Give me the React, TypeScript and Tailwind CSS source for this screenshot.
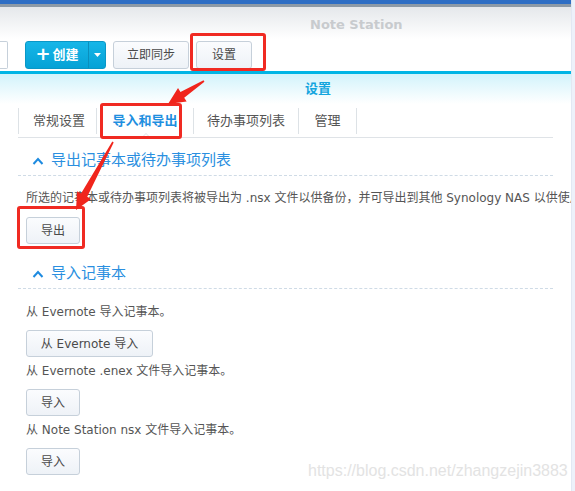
const font = { fontFamily: '"DejaVu Sans", "Noto Sans CJK SC", sans-serif' };

function Btn({ children, className = "" }: { children: React.ReactNode; className?: string }) {
  return (
    <div
      className={
        "h-[27px] flex items-center justify-center rounded-[3px] border border-[#c6d0da] bg-gradient-to-b from-[#fbfcfe] to-[#eef2f7] text-[12px] text-[#4a4a4a] " +
        className
      }
    >
      {children}
    </div>
  );
}

// tapered red arrow, tail -> tip
function Arrow({ x1, y1, x2, y2 }: { x1: number; y1: number; x2: number; y2: number }) {
  const dx = x2 - x1;
  const dy = y2 - y1;
  const len = Math.hypot(dx, dy);
  const ux = dx / len;
  const uy = dy / len;
  const px = -uy;
  const py = ux;
  const head = 17;
  const hw = 8;
  const bx = x2 - ux * head;
  const by = y2 - uy * head;
  const pts = [
    [x1 + px * 0.8, y1 + py * 0.8],
    [bx + px * 3.5, by + py * 3.5],
    [bx + px * hw, by + py * hw],
    [x2, y2],
    [bx - px * hw, by - py * hw],
    [bx - px * 3.5, by - py * 3.5],
    [x1 - px * 0.8, y1 - py * 0.8],
  ]
    .map(p => p.join(","))
    .join(" ");
  return <polygon points={pts} fill="#f0251c" />;
}

function Section({ title }: { title: string }) {
  return (
    <div className="mx-[18px] h-[38px] border-b border-dashed border-[#cfdbe6] flex items-center pl-[14px] pt-[8px]">
      <svg width="12" height="8" viewBox="0 0 12 8" className="mr-[7px]">
        <path d="M1.5 7 L6 2 L10.5 7" fill="none" stroke="#1e8be0" strokeWidth="2" />
      </svg>
      <span className="text-[15px] text-[#2a8fe0]">{title}</span>
    </div>
  );
}

export default function App() {
  return (
    <div className="relative w-[575px] h-[491px] overflow-hidden bg-white flex" style={font}>
      <div className="w-[571px] flex flex-col">
        <div className="h-[4px] bg-[#2e6ec4]" />
        <div className="h-[3px] bg-[#8d9aa6]" />
        <div className="h-[64px] bg-gradient-to-b from-[#e5e8eb] via-white to-white">
          <div className="h-[34px] pt-[2px] flex items-center pl-[310px] text-[13px] font-bold text-[#c8cbce]">
            Note Station
          </div>
          <div className="flex items-center h-[28px]">
            <div className="w-[8px] h-[28px] border border-[#c6d0da] border-l-0 bg-white rounded-r-[2px]" />
            <div className="ml-[17px] w-[81px] h-[28px] flex rounded-[3px] border border-[#0a97c6] bg-gradient-to-b from-[#16b6e8] to-[#05a2d6] text-white">
              <div className="w-[62px] flex items-center justify-center gap-[2px] font-bold text-[13px]">
                <span className="text-[18px] leading-none -mt-[2px]">+</span>
                <span>创建</span>
              </div>
              <div className="flex-1 border-l border-[#0a8fbd] flex items-center justify-center">
                <svg width="7" height="4" viewBox="0 0 7 4">
                  <path d="M0 0 L7 0 L3.5 4Z" fill="white" />
                </svg>
              </div>
            </div>
            <Btn className="ml-[7px] w-[76px] !h-[28px]">立即同步</Btn>
            <Btn className="ml-[7px] w-[56px] !h-[28px]">设置</Btn>
          </div>
        </div>
        <div className="h-[3px] bg-[#00b5e5]" />
        <div className="bg-gradient-to-b from-[#d2f3fb] to-white">
          <div className="h-[30px] flex items-center pl-[305px] text-[13px] font-bold text-[#14a5de]">设置</div>
        </div>
        <div className="mx-[18px] h-[34px] border-b border-[#dfe3e7] flex items-center text-[13px] text-[#555]">
          <div className="h-[26px] border-l border-[#dde2e6]" />
          <div className="w-[77px] pl-[3px] text-center">常规设置</div>
          <div className="h-[26px] border-l border-[#dde2e6]" />
          <div className="relative w-[96px] h-full flex items-center justify-center font-bold text-[#1f8fe0]">
            导入和导出
            <div className="absolute bottom-[-1px] left-[44px] w-0 h-0 border-x-[5px] border-x-transparent border-b-[5px] border-b-[#dfe3e7]" />
            <div className="absolute bottom-[-1px] left-[45px] w-0 h-0 border-x-[4px] border-x-transparent border-b-[4px] border-b-white" />
          </div>
          <div className="h-[26px] border-l border-[#dde2e6]" />
          <div className="w-[104px] text-center">待办事项列表</div>
          <div className="h-[26px] border-l border-[#dde2e6]" />
          <div className="w-[57px] text-center">管理</div>
          <div className="h-[26px] border-l border-[#dde2e6]" />
        </div>
        <Section title="导出记事本或待办事项列表" />
        <div className="pl-[26px] pt-[13px] text-[12px] text-[#555] whitespace-nowrap overflow-hidden">
          所选的记事本或待办事项列表将被导出为 .nsx 文件以供备份，并可导出到其他 Synology NAS 以供使用。
        </div>
        <Btn className="ml-[26px] mt-[10px] w-[54px]">导出</Btn>
        <div className="h-[7px]" />
        <Section title="导入记事本" />
        <div className="pl-[26px] text-[12px] text-[#555] flex flex-col">
          <div className="mt-[14px] h-[18px] leading-[18px]">从 Evernote 导入记事本。</div>
          <Btn className="mt-[9px] w-[127px]">从 Evernote 导入</Btn>
          <div className="mt-[5px] h-[18px] leading-[18px]">从 Evernote .enex 文件导入记事本。</div>
          <Btn className="mt-[9px] w-[54px]">导入</Btn>
          <div className="mt-[5px] h-[18px] leading-[18px]">从 Note Station nsx 文件导入记事本。</div>
          <Btn className="mt-[9px] w-[54px]">导入</Btn>
        </div>
      </div>
      <div className="w-[4px] bg-[#edf1fa] border-l border-[#e2e8f3]" />

      {/* annotations */}
      <div className="absolute left-[190px] top-[33px] w-[76px] h-[38px] border-[3px] border-[#f02a22] rounded-[3px]" />
      <div className="absolute left-[100px] top-[103px] w-[82px] h-[36px] border-[3px] border-[#f02a22] rounded-[3px]" />
      <div className="absolute left-[17px] top-[206px] w-[68px] h-[43px] border-[3px] border-[#f02a22] rounded-[3px]" />
      <svg className="absolute left-0 top-0 pointer-events-none" width="575" height="491">
        <Arrow x1={204} y1={81} x2={168} y2={104} />
        <Arrow x1={113} y1={142} x2={76} y2={210} />
      </svg>
      <div
        className="absolute left-[308px] top-[459px] text-[16px] text-[#e3e3e3]"
        style={{ fontFamily: '"Liberation Sans", Arial, sans-serif' }}
      >
        https://blog.csdn.net/zhangzejin3883
      </div>
    </div>
  );
}
